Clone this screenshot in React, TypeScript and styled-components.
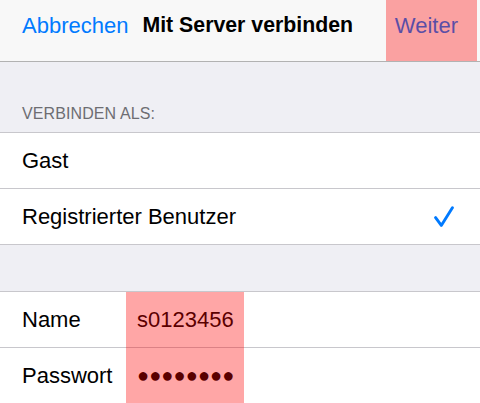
import styled, { createGlobalStyle } from 'styled-components';

const GlobalStyle = createGlobalStyle`
  html, body {
    margin: 0;
    padding: 0;
    background: #efeff4;
  }
  body {
    font-family: 'Liberation Sans', Arial, sans-serif;
    -webkit-font-smoothing: antialiased;
  }
`;

const Page = styled.div`
  width: 480px;
  height: 403px;
  overflow: hidden;
  background: #efeff4;
`;

const NavBar = styled.div`
  display: flex;
  align-items: stretch;
  height: 61px;
  padding-right: 3px;
  background: #f8f8f8;
  border-bottom: 1px solid #b2b2b2;
`;

const NavItem = styled.div<{ $bold?: boolean; $marked?: boolean }>`
  position: relative;
  display: flex;
  align-items: center;
  padding-bottom: 10px;
  font-size: ${(p) => (p.$bold ? '21.3px' : '22px')};
  font-weight: ${(p) => (p.$bold ? 700 : 400)};
  color: ${(p) => (p.$bold ? '#000' : '#007aff')};
  padding-left: ${(p) => (p.$marked ? '9px' : '0')};
  padding-right: ${(p) => (p.$marked ? '19px' : '0')};

  &::after {
    content: '';
    display: ${(p) => (p.$marked ? 'block' : 'none')};
    position: absolute;
    inset: 0;
    background: rgba(255, 0, 0, 0.35);
  }
`;

const CancelItem = styled(NavItem)`
  margin-left: 22px;
  margin-right: 14px;
`;

const Spacer = styled.div`
  flex: 1;
`;

const SectionHeader = styled.div`
  display: flex;
  align-items: flex-end;
  height: 70px;
  box-sizing: border-box;
  padding: 0 22px 9px;
  font-size: 16px;
  color: #6d6d72;
  letter-spacing: 0.1px;
`;

const Group = styled.div`
  position: relative;
  background: #fff;
  border-top: 1px solid #c8c7cc;
`;

const Row = styled.div`
  display: flex;
  align-items: center;
  height: 55px;
  padding: 0 26px 0 22px;
  border-bottom: 1px solid #c8c7cc;
  font-size: 22px;
  color: #000;
`;

const Label = styled.span`
  flex: 1;
`;

const FieldLabel = styled.span`
  width: 115px;
`;

const FieldValue = styled.span<{ $secret?: boolean }>`
  font-size: ${(p) => (p.$secret ? '20px' : '22px')};
  letter-spacing: ${(p) => (p.$secret ? '0.1px' : '0')};
`;

const Gap = styled.div`
  height: 46px;
`;

const ValueMark = styled.div`
  position: absolute;
  top: 0;
  bottom: 0;
  left: 126px;
  width: 118px;
  background: rgba(255, 0, 0, 0.35);
  pointer-events: none;
`;

const Check = () => (
  <svg width="20" height="22" viewBox="0 0 20 22">
    <polyline
      points="1.6,11.6 7.3,19.4 18.4,1.8"
      fill="none"
      stroke="#007aff"
      strokeWidth="2.9"
      strokeLinecap="round"
      strokeLinejoin="round"
    />
  </svg>
);

export default function App() {
  return (
    <Page>
      <GlobalStyle />
      <NavBar>
        <CancelItem>Abbrechen</CancelItem>
        <NavItem $bold>Mit Server verbinden</NavItem>
        <Spacer />
        <NavItem $marked>Weiter</NavItem>
      </NavBar>

      <SectionHeader>VERBINDEN ALS:</SectionHeader>
      <Group>
        <Row>
          <Label>Gast</Label>
        </Row>
        <Row>
          <Label>Registrierter Benutzer</Label>
          <Check />
        </Row>
      </Group>

      <Gap />

      <Group>
        <Row>
          <FieldLabel>Name</FieldLabel>
          <FieldValue>s0123456</FieldValue>
        </Row>
        <Row>
          <FieldLabel>Passwort</FieldLabel>
          <FieldValue $secret>●●●●●●●●</FieldValue>
        </Row>
        <ValueMark />
      </Group>
    </Page>
  );
}
